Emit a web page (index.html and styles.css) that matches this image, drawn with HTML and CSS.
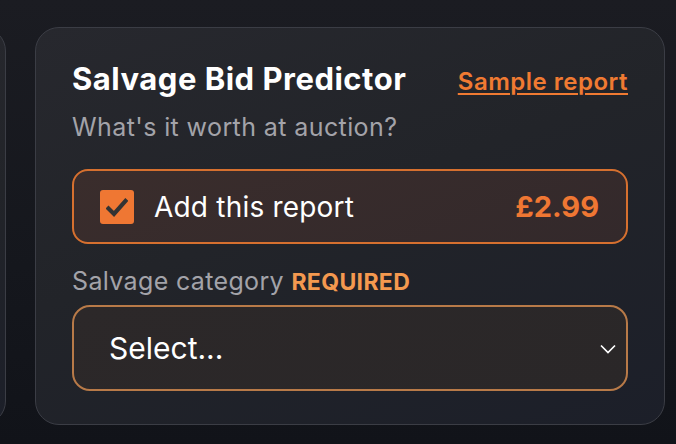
FILE: index.html
```html
<!DOCTYPE html>
<html lang="en">
<head>
<meta charset="utf-8">
<title>Salvage Bid Predictor</title>
<link rel="stylesheet" href="styles.css">
</head>
<body>
<div class="row">
  <div class="card stub"></div>
  <section class="card main">
    <header class="head">
      <h2 class="title">Salvage Bid Predictor</h2>
      <a class="sample" href="#">Sample report</a>
    </header>
    <p class="subtitle">What's it worth at auction?</p>
    <label class="addrow">
      <span class="check">
        <svg width="22" height="20" viewBox="0 0 22 20"><path d="M2.5 10.5 L8 16 L19.5 3" fill="none" stroke="#333" stroke-width="4.2" stroke-linecap="square"/></svg>
      </span>
      <span class="addtext">Add this report</span>
      <span class="price">£2.99</span>
    </label>
    <div class="fieldlabel">Salvage category <span class="req">REQUIRED</span></div>
    <div class="select">
      <span class="seltext">Select...</span>
      <svg class="chev" width="16" height="10" viewBox="0 0 16 10"><path d="M1 1.5 L8 8.5 L15 1.5" fill="none" stroke="#fff" stroke-width="1.7"/></svg>
    </div>
  </section>
</div>
</body>
</html>
```

FILE: styles.css
```css
* { box-sizing: border-box; }
html, body { margin: 0; height: 100%; }
body {
  background: linear-gradient(180deg, #1b1c22 0%, #15171d 60%, #111319 100%);
  font-family: Inter, "Noto Sans", sans-serif;
  overflow: hidden;
}
.row {
  display: flex;
  gap: 29px;
  padding-top: 27px;
  margin-left: -94px;
}
.card {
  border: 1px solid #3b3d45;
  border-radius: 24px;
  background: linear-gradient(160deg, #27282e 0%, #222429 45%, #1c1f29 100%);
}
.stub {
  width: 100px;
  height: 398px;
  flex: none;
}
.main {
  width: 630px;
  flex: none;
  padding: 33px 36px 33px 36px;
}
.head {
  display: flex;
  justify-content: space-between;
  align-items: baseline;
}
.title {
  margin: 0;
  font-size: 31px;
  line-height: 36px;
  font-weight: 700;
  color: #ffffff;
  letter-spacing: 0.5px;
}
.sample {
  font-size: 24px;
  font-weight: 600;
  color: #f07a32;
  letter-spacing: 0.5px;
  text-decoration: underline;
  text-decoration-thickness: 2px;
  text-underline-offset: 3px;
}
.subtitle {
  margin: 15px 0 0 0;
  font-size: 25px;
  line-height: 30px;
  letter-spacing: 0.4px;
  color: #a3a3a9;
}
.addrow {
  margin-top: 27px;
  height: 75px;
  border: 2px solid #d6702f;
  border-radius: 16px;
  background: linear-gradient(160deg, #3a2d2c 0%, #33292b 100%);
  display: flex;
  align-items: center;
  padding: 0 27px 0 26px;
  gap: 20px;
}
.check {
  width: 34px;
  height: 34px;
  border-radius: 3px;
  background: #ef7733;
  display: flex;
  align-items: center;
  justify-content: center;
  flex: none;
}
.check svg { margin-top: 2px; }
.addtext {
  flex: 1;
  font-size: 28px;
  letter-spacing: 0.2px;
  color: #ffffff;
}
.price {
  font-size: 29px;
  font-weight: 700;
  letter-spacing: 0;
  color: #ef7733;
}
.fieldlabel {
  margin-top: 23px;
  font-size: 25px;
  line-height: 28px;
  letter-spacing: 0.35px;
  color: #a3a3a9;
}
.req {
  font-size: 23px;
  font-weight: 700;
  color: #f4994f;
}
.select {
  margin-top: 9px;
  height: 86px;
  border: 2px solid #b87a48;
  border-radius: 18px;
  background: linear-gradient(160deg, #2c2829 0%, #2a2728 100%);
  display: flex;
  align-items: center;
  justify-content: space-between;
  padding: 0 10px 0 35px;
}
.seltext {
  font-size: 30px;
  color: #ffffff;
}
.chev { margin-top: 2px; }
```
